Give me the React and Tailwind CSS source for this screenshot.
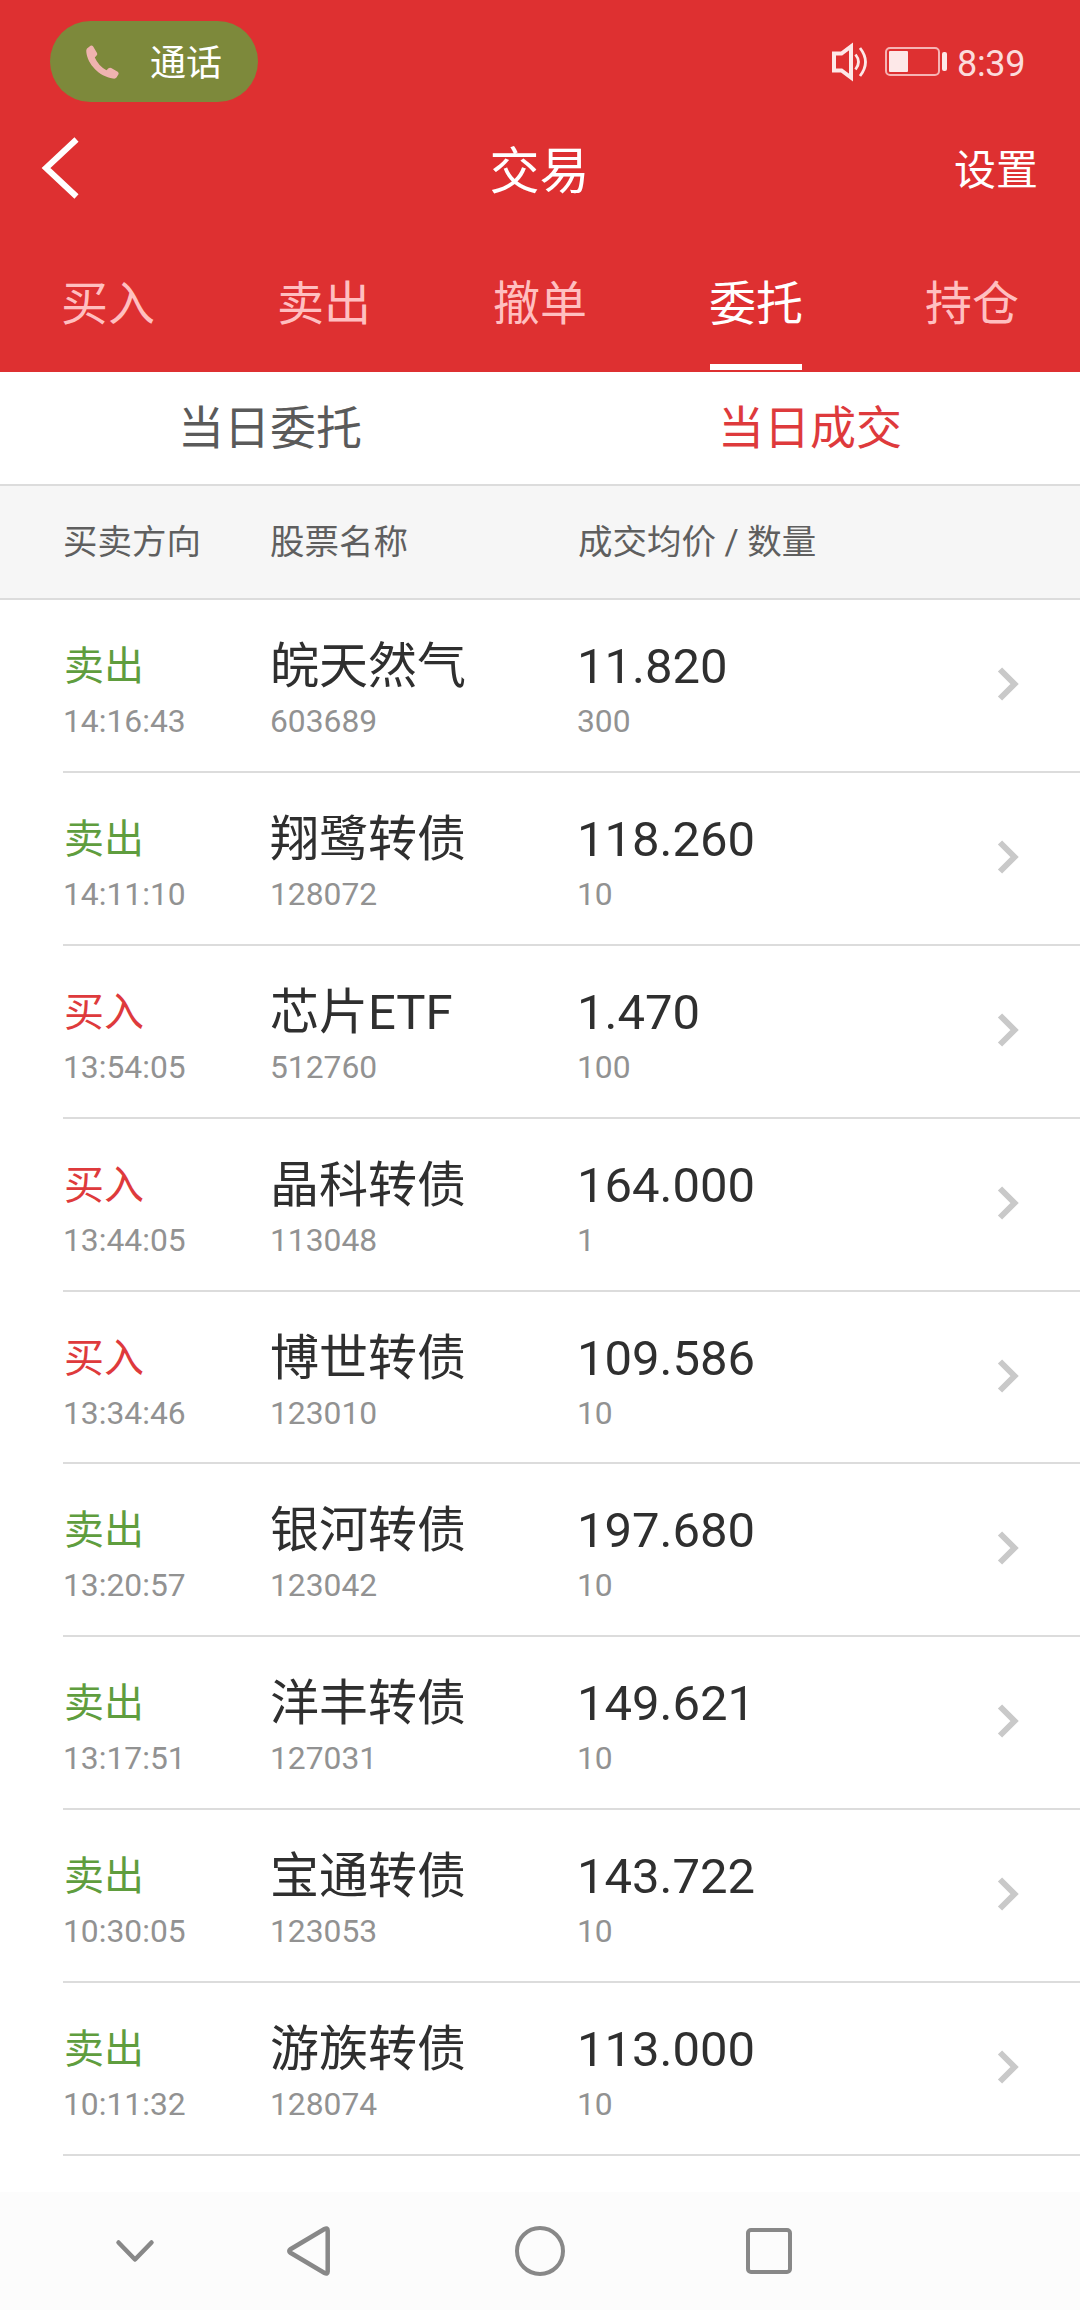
const trades = [
  { side: '卖出', time: '14:16:43', name: '皖天然气', code: '603689', price: '11.820', qty: '300' },
  { side: '卖出', time: '14:11:10', name: '翔鹭转债', code: '128072', price: '118.260', qty: '10' },
  { side: '买入', time: '13:54:05', name: '芯片ETF', code: '512760', price: '1.470', qty: '100' },
  { side: '买入', time: '13:44:05', name: '晶科转债', code: '113048', price: '164.000', qty: '1' },
  { side: '买入', time: '13:34:46', name: '博世转债', code: '123010', price: '109.586', qty: '10' },
  { side: '卖出', time: '13:20:57', name: '银河转债', code: '123042', price: '197.680', qty: '10' },
  { side: '卖出', time: '13:17:51', name: '洋丰转债', code: '127031', price: '149.621', qty: '10' },
  { side: '卖出', time: '10:30:05', name: '宝通转债', code: '123053', price: '143.722', qty: '10' },
  { side: '卖出', time: '10:11:32', name: '游族转债', code: '128074', price: '113.000', qty: '10' },
];

const tabs = ['买入', '卖出', '撤单', '委托', '持仓'];

function StatusBar() {
  return (
    <div className="flex h-[123px] items-center justify-between pl-[50px] pr-[54px]">
      <div className="flex h-[81px] w-[208px] items-center rounded-full bg-[#7d893b] pl-[36px]">
        <svg className="h-[34px] w-[34px]" viewBox="0 0 34 34" fill="#f0b3b0">
          <path d="M1 3.500 4.500.8Q6 0 7 1.300L11 8q.8 1.300-.4 2.400L8.800 12.500Q12.500 21 20.500 25.300L22.500 23.300q1.300-1 2.700-.3l6.500 3.800q1.500 1 .8 2.500L30.500 32.500q-1 1.500-3.500 1C13 31.500 1.500 19 .3 7Q0 4.700 1 3.500Z" />
        </svg>
        <span className="ml-[30px] pt-[5px] text-[36px] leading-[50px] text-white">通话</span>
      </div>
      <div className="flex items-center">
        <svg className="h-[40px] w-[40px]" viewBox="0 0 40 40" fill="none" stroke="#fde8e8">
          <path d="M3 11.500H10.500L20 4.500V35.500L10.500 28.500H3Z" strokeWidth="4" />
          <path d="M24.500 12.500Q30.500 20 24.500 27.500M29 6Q40 20 29 34" strokeWidth="2.800" />
        </svg>
        <div className="ml-[14px] flex h-[29px] w-[55px] items-center rounded-[5px] border-2 border-[#f6b4b4] pl-[2px]">
          <div className="h-[21px] w-[19px] rounded-[1px] bg-[#fde8e8]" />
        </div>
        <div className="ml-[2px] h-[19px] w-[5px] rounded-[2px] bg-[#fde8e8]" />
        <span className="ml-[10px] w-[69px] whitespace-nowrap pt-[4px] text-[36px] leading-[44px] tracking-[-0.300px] text-[#fbdcdc]">8:39</span>
      </div>
    </div>
  );
}

function TitleBar() {
  return (
    <div className="grid h-[90px] grid-cols-3 items-center pl-[41px] pr-[42px]">
      <svg className="h-[62px] w-[40px]" viewBox="0 0 40 62" fill="none" stroke="#fff" strokeWidth="6">
        <path d="M35.500 2.500 5 31 35.500 59.500" />
      </svg>
      <h1 className="pt-[8px] text-center text-[50px] leading-[70px] text-white">交易</h1>
      <span className="pt-[6px] text-right text-[42px] leading-[60px] text-white">设置</span>
    </div>
  );
}

function Row({ t }) {
  return (
    <div className="ml-[63px] grid h-[172.875px] grid-cols-[207px_307px_1fr] border-b-2 border-[#dcdcdc] pt-[39px]">
      <div>
        <div className={t.side === '卖出' ? 'pl-px text-[40px] leading-[56px] text-[#5f9d3e]' : 'pl-px text-[40px] leading-[56px] text-[#de3a3c]'}>{t.side}</div>
        <div className="mt-px text-[31.800px] leading-[50px] text-[#929292]">{t.time}</div>
      </div>
      <div>
        <div className="text-[49px] leading-[56px] text-[#2f2f2f]">{t.name}</div>
        <div className="mt-px text-[31.800px] leading-[50px] text-[#929292]">{t.code}</div>
      </div>
      <div className="flex justify-between">
        <div>
          <div className="text-[49px] leading-[56px] text-[#2f2f2f]">{t.price}</div>
          <div className="mt-px text-[31.800px] leading-[50px] text-[#929292]">{t.qty}</div>
        </div>
        <svg className="mr-[60px] mt-[27px] h-[36px] w-[24px]" viewBox="0 0 24 36" fill="none" stroke="#c9c9c9" strokeWidth="6">
          <path d="M4 3.500 18.500 18 4 32.500" />
        </svg>
      </div>
    </div>
  );
}

export default function App() {
  return (
    <div className="flex h-[2310px] w-[1080px] flex-col overflow-hidden bg-white font-[Roboto,'Noto_Sans_CJK_SC',sans-serif]">
      <header className="h-[372px] shrink-0 bg-[#de3031]">
        <StatusBar />
        <TitleBar />
        <nav className="grid h-[157px] grid-cols-5">
          {tabs.map((tab) => (
            <div key={tab} className="flex flex-col items-center">
              <span className={tab === '委托' ? 'mt-[56px] text-[47px] leading-[70px] text-white' : 'mt-[56px] text-[47px] leading-[70px] text-[#ffbfc0]'}>{tab}</span>
              {tab === '委托' && <span className="mt-[25px] h-[6px] w-[92px] bg-white" />}
            </div>
          ))}
        </nav>
      </header>
      <div className="grid h-[114px] shrink-0 grid-cols-2 border-b-2 border-[#dcdcdc] pt-[21px] text-center text-[46px] leading-[70px]">
        <span className="text-[#5a5a5a]">当日委托</span>
        <span className="text-[#de3a3c]">当日成交</span>
      </div>
      <div className="grid h-[114px] shrink-0 grid-cols-[207px_308px_1fr] items-center border-b-2 border-[#dcdcdc] bg-[#f6f6f6] pl-[63px] pt-[2px] text-[34.500px] text-[#5f5f5f]">
        <span>买卖方向</span>
        <span>股票名称</span>
        <span>成交均价 / 数量</span>
      </div>
      <main className="h-[1592px] shrink-0">
        {trades.map((t) => (
          <Row key={t.code} t={t} />
        ))}
      </main>
      <footer className="flex h-[118px] shrink-0 items-center bg-[#fcfcfc]">
        <svg className="ml-[115px] h-[24px] w-[40px]" viewBox="0 0 40 24" fill="none" stroke="#888" strokeWidth="4.500" strokeLinecap="round" strokeLinejoin="round">
          <path d="M3.500 3.500 20 20.500 36.500 3.500" />
        </svg>
        <svg className="ml-[131px] h-[54px] w-[46px]" viewBox="0 0 46 54" fill="none" stroke="#888" strokeWidth="4.500">
          <path d="M38.500 5 4.500 25.200Q2 27 4.500 28.800L38.500 49Q41.700 50.500 41.700 47.500V6.500Q41.700 3.500 38.500 5Z" />
        </svg>
        <div className="ml-[183px] h-[50px] w-[50px] rounded-full border-[4.500px] border-[#888]" />
        <div className="ml-[181px] h-[46px] w-[46px] rounded-[5px] border-[4.500px] border-[#888]" />
      </footer>
    </div>
  );
}
